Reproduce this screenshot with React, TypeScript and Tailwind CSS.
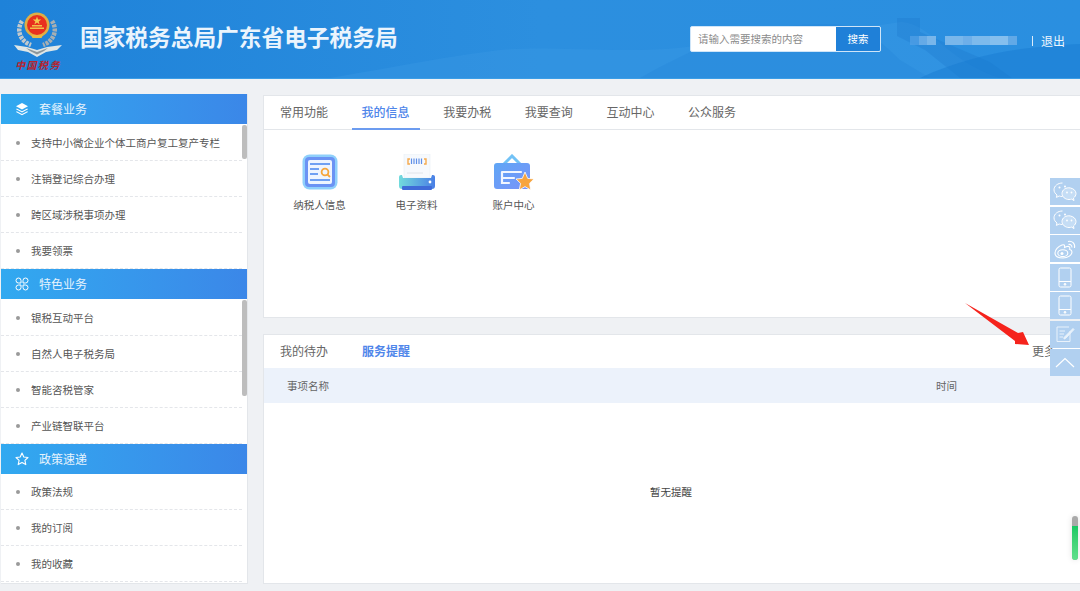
const cjk = { fontFamily: '"Noto Sans CJK SC", "Liberation Sans", sans-serif' }

function Emblem() {
  return (
    <svg width="50" height="45" viewBox="0 0 50 45" className="block">
      {/* wreath */}
      <path d="M9 9 C3 18 7 29 18 33" fill="none" stroke="#c3c9cc" strokeWidth="4.5" strokeDasharray="3 1" />
      <path d="M39 9 C45 18 41 29 30 33" fill="none" stroke="#a7afb3" strokeWidth="4.5" strokeDasharray="3 1" />
      {/* ribbon */}
      <path d="M1 33 L14 35 L24 38 L34 35 L49 33 L44 38 L33 40 L24 45 L15 40 L5 38 Z" fill="#dfe6e6" />
      <path d="M13 36 L24 40 L35 36 L31 39 L24 42.5 L17 39 Z" fill="#8d979b" />
      {/* shield */}
      <circle cx="24" cy="13" r="12.5" fill="#e0ae45" />
      <circle cx="24" cy="13" r="10" fill="#e8301f" />
      <path d="M24 4.5 l1.1 3 3.1 0 -2.5 1.9 0.9 3 -2.6 -1.8 -2.6 1.8 0.9 -3 -2.5 -1.9 3.1 0 z" fill="#f3c94e" />
      <path d="M17 15.5 h14 v1.6 h-14 z M19 13 h10 v1.6 h-10 z" fill="#f0c14a" />
      <path d="M18 23 h12 l-1.5 3 h-9 z" fill="#e9b844" />
    </svg>
  )
}

function Mountains() {
  return (
    <svg className="absolute inset-0 h-full w-full" viewBox="0 0 1080 78" preserveAspectRatio="none">
      <path d="M330 78 C400 66 450 56 500 50 C560 44 640 58 720 42 C790 26 860 30 900 22 C930 22 945 60 1000 78 Z" fill="#3d9ae4" fillOpacity="0.35" />
      <path d="M640 78 C690 50 740 24 830 24 C860 24 880 40 900 60 L930 78 Z" fill="#1f7fd6" fillOpacity="0.25" />
      <path d="M897 18 L920 18 L920 32 L990 62 L1012 78 L960 78 L925 50 L897 36 Z" fill="#1a74c9" fillOpacity="0.28" />
      <path d="M920 78 C980 50 1040 46 1080 44 L1080 78 Z" fill="#1779d1" fillOpacity="0.45" />
    </svg>
  )
}

function Header() {
  return (
    <header className="relative flex h-[79px] items-center justify-between border-b border-[#3b9de6] bg-gradient-to-r from-[#1e82d9] via-[#2c8fdf] to-[#2a8fe0]">
      <Mountains />
      <div className="relative flex items-center pl-[13px]">
        <div className="flex w-[50px] flex-col items-center pt-[4px]">
          <Emblem />
          <span className="mt-[2px] text-[10px] font-bold leading-[12px] tracking-[1.4px] whitespace-nowrap text-[#b5232f] italic">中国税务</span>
        </div>
        <h1 className="mb-[3px] ml-[17px] text-[22.7px] font-bold whitespace-nowrap text-[#eaf4fd]">国家税务总局广东省电子税务局</h1>
      </div>
      <div className="relative flex items-center pr-[15px] pb-[1px]">
        <div className="flex h-[26px] w-[191px] overflow-hidden rounded-[2px] border border-[#cfe5f8] bg-white">
          <span className="flex flex-1 items-center pl-[7px] text-[10.5px] text-[#8b8b8b]">请输入需要搜索的内容</span>
          <span className="flex w-[44px] items-center justify-center bg-[#1f80d8] text-[10.5px] text-white">搜索</span>
        </div>
        <div className="mt-[4px] ml-[29px] flex h-[9px] items-center opacity-80">
          <span className="h-full w-[9px] bg-[#4f9fe6]" />
          <span className="h-full w-[8px] bg-[#74b2ea]" />
          <span className="h-full w-[9px] bg-[#8dc1ee]" />
          <span className="ml-[9px] h-full w-[18px] bg-[#8dc1ee]" />
          <span className="h-full w-[9px] bg-[#7fb8ec]" />
          <span className="h-full w-[18px] bg-[#92c5f0]" />
          <span className="h-full w-[18px] bg-[#9ccbf2]" />
          <span className="h-full w-[9px] bg-[#6fb0e9]" />
        </div>
        <span className="mt-[4px] ml-[15px] h-[10px] w-px bg-[#dcecfa]" />
        <span className="mt-[4px] ml-[8px] text-[12px] text-[#eef6fd]">退出</span>
      </div>
    </header>
  )
}

function SideHead({ icon, title }: { icon: React.ReactNode; title: string }) {
  return (
    <div className="flex h-[30px] items-center bg-gradient-to-r from-[#31a9f0] to-[#3b87e8] text-white">
      <span className="flex w-[38px] justify-center pl-[3px]">{icon}</span>
      <span className="text-[12px] text-[#e6f3fd]">{title}</span>
    </div>
  )
}

function SideRows({ items, bar, pad }: { items: string[]; bar: string; pad: string }) {
  return (
    <div className={pad}>
      <div className="relative">
        {items.map((t) => (
          <div key={t} className="mr-[5px] flex h-[36px] items-center border-b border-dashed border-[#e4e6ea]">
            <span className="ml-[15px] h-[4px] w-[4px] rounded-full bg-[#9a9a9a]" />
            <span className="ml-[11px] text-[10.5px] whitespace-nowrap text-[#555]">{t}</span>
          </div>
        ))}
        <div className={bar} />
      </div>
    </div>
  )
}

function Sidebar() {
  return (
    <aside className="ml-[1px] h-[490px] w-[247px] shrink-0 overflow-hidden border-r border-b border-[#e3e6ea] bg-white">
      <SideHead
        title="套餐业务"
        icon={
          <svg width="14" height="14" viewBox="0 0 14 14" fill="#fff">
            <path d="M7 1 L13 4.3 L7 7.6 L1 4.3 Z" />
            <path d="M1.8 6.4 L7 9.2 L12.2 6.4 L13 7.2 L7 10.4 L1 7.2 Z" />
            <path d="M1.8 9.2 L7 12 L12.2 9.2 L13 10 L7 13.2 L1 10 Z" />
          </svg>
        }
      />
      <SideRows
        pad="pt-px"
        items={["支持中小微企业个体工商户复工复产专栏", "注销登记综合办理", "跨区域涉税事项办理", "我要领票"]}
        bar="absolute top-0 right-0 h-[34px] w-[5px] rounded-[2px] bg-[#bdbdbd]"
      />
      <SideHead
        title="特色业务"
        icon={
          <svg width="14" height="14" viewBox="0 0 14 14" fill="none" stroke="#fff" strokeWidth="1">
            <path d="M3.5 1 a2.5 2.5 0 0 1 2.5 2.5 V6 H3.5 a2.5 2.5 0 0 1 0 -5 Z" />
            <path d="M10.5 1 a2.5 2.5 0 0 0 -2.5 2.5 V6 h2.5 a2.5 2.5 0 0 0 0 -5 Z" />
            <path d="M3.5 13 a2.5 2.5 0 0 0 2.5 -2.5 V8 H3.5 a2.5 2.5 0 0 0 0 5 Z" />
            <path d="M10.5 13 a2.5 2.5 0 0 1 -2.5 -2.5 V8 h2.5 a2.5 2.5 0 0 1 0 5 Z" />
          </svg>
        }
      />
      <SideRows
        pad="pt-px"
        items={["银税互动平台", "自然人电子税务局", "智能咨税管家", "产业链智联平台"]}
        bar="absolute top-0 right-0 h-[96px] w-[5px] rounded-[2px] bg-[#bdbdbd]"
      />
      <SideHead
        title="政策速递"
        icon={
          <svg width="14" height="14" viewBox="0 0 14 14" fill="none" stroke="#fff" strokeWidth="1.1" strokeLinejoin="round">
            <path d="M7 1 L8.8 5 L13 5.5 L9.9 8.3 L10.8 12.6 L7 10.4 L3.2 12.6 L4.1 8.3 L1 5.5 L5.2 5 Z" />
          </svg>
        }
      />
      <SideRows pad="" items={["政策法规", "我的订阅", "我的收藏"]} bar="hidden" />
    </aside>
  )
}

function ProfileIcon() {
  return (
    <svg width="36" height="36" viewBox="0 0 36 36">
      <rect x="0.5" y="0.5" width="35" height="35" rx="7" fill="#8fd0fb" />
      <rect x="3" y="3" width="30" height="30" rx="4" fill="#6b93f4" />
      <rect x="6" y="6" width="24" height="24" rx="2" fill="#eef5ff" />
      <path d="M8 9 H28 V11 H8 Z M8 14 H17 V16 H8 Z M8 19 H16 V21 H8 Z M8 25 H28 V27 H8 Z" fill="#6fa0f3" />
      <circle cx="23" cy="18" r="3.4" fill="none" stroke="#f5a63d" strokeWidth="1.8" />
      <path d="M25.4 20.4 L28 23" stroke="#f5a63d" strokeWidth="1.8" />
    </svg>
  )
}

function PrinterIcon() {
  return (
    <svg width="38" height="36" viewBox="0 0 38 36">
      <rect x="6" y="0" width="26" height="24" fill="#f6f9fd" stroke="#e6edf6" strokeWidth="0.6" />
      <path d="M12 5 H10 V10 H12 M26 5 H28 V10 H26" fill="none" stroke="#f5ab4e" strokeWidth="1.4" />
      <path d="M13.5 4.5 V10 M16 4.5 V10 M18.5 4.5 V10 M21 4.5 V10 M23.5 4.5 V10" stroke="#5f8fe8" strokeWidth="1.2" />
      <path d="M9 19 H25" stroke="#e0e4ea" strokeWidth="1" />
      <path d="M1 23 C1 21 3 21 4 21 L5 24 H33 L34 21 C35 21 37 21 37 23 V32 C37 34 36 35 34 35 H4 C2 35 1 34 1 32 Z" fill="url(#pg)" />
      <rect x="4" y="32" width="30" height="4" rx="1" fill="#3f6bd8" />
      <circle cx="32" cy="28" r="1.4" fill="#fff" />
      <defs>
        <linearGradient id="pg" x1="0" x2="1" y1="0" y2="0">
          <stop offset="0" stopColor="#72dbdc" />
          <stop offset="1" stopColor="#4a7fe6" />
        </linearGradient>
      </defs>
    </svg>
  )
}

function AccountIcon() {
  return (
    <svg width="40" height="37" viewBox="0 0 40 37">
      <path d="M10 10 L18 2 L26 10" fill="none" stroke="#72c2f6" strokeWidth="3" />
      <rect x="0" y="9" width="36" height="26" rx="3" fill="url(#ag)" />
      <path d="M8 18 H27 M8 24 H20 M8 18 V29 H15" fill="none" stroke="#f1f6ff" strokeWidth="2.2" strokeLinecap="round" />
      <path d="M31 18 L33.7 24.4 L40 25 L35.4 29.4 L36.8 36 L31 32.6 L25.2 36 L26.6 29.4 L22 25 L28.3 24.4 Z" fill="#f7a43e" stroke="#fff" strokeWidth="0.8" />
      <defs>
        <linearGradient id="ag" x1="0" x2="1" y1="0" y2="1">
          <stop offset="0" stopColor="#5fa6f5" />
          <stop offset="1" stopColor="#7a93f9" />
        </linearGradient>
      </defs>
    </svg>
  )
}

const tabs = ["常用功能", "我的信息", "我要办税", "我要查询", "互动中心", "公众服务"]

function InfoPanel() {
  const apps = [
    { label: "纳税人信息", icon: <ProfileIcon /> },
    { label: "电子资料", icon: <PrinterIcon /> },
    { label: "账户中心", icon: <AccountIcon /> },
  ]
  return (
    <section className="mt-[1px] h-[223px] border-y border-l border-[#e3e6ea] bg-white">
      <div className="flex h-[34px] gap-[13.6px] border-b border-[#e3e6ea] pl-[6px]">
        {tabs.map((t) => (
          <div
            key={t}
            className={
              t === "我的信息"
                ? "flex h-[34px] items-center border-b-2 border-[#6c9cf0] px-[10px] text-[12px] font-medium text-[#4f86ea]"
                : "flex h-[34px] items-center px-[10px] pb-[2px] text-[12px] text-[#666]"
            }
          >
            {t}
          </div>
        ))}
      </div>
      <div className="flex pt-[24px] pl-[7px]">
        {apps.map((a) => (
          <div key={a.label} className="flex w-[97px] flex-col items-center">
            <div className="flex h-[36px] items-center justify-center">{a.icon}</div>
            <span className="mt-[7px] text-[10.5px] leading-[16px] text-[#555]">{a.label}</span>
          </div>
        ))}
      </div>
    </section>
  )
}

function RemindPanel() {
  return (
    <section className="mt-[16px] flex h-[250px] flex-col border-y border-l border-[#e3e6ea] bg-white">
      <div className="flex h-[33px] shrink-0 items-center pb-[2px] pl-[16px]">
        <span className="text-[12px] text-[#666]">我的待办</span>
        <span className="ml-[34px] text-[12px] font-bold text-[#4f86ea]">服务提醒</span>
        <span className="ml-[622px] text-[12px] whitespace-nowrap text-[#666]">更多</span>
      </div>
      <div className="flex h-[35px] shrink-0 items-center bg-[#ecf2fb] pl-[23px] text-[10.5px] text-[#666]">
        <span className="w-[649px]">事项名称</span>
        <span>时间</span>
      </div>
      <div className="flex flex-1 items-center justify-center pr-[2px] pb-[3px] text-[10.5px] text-[#444]">暂无提醒</div>
    </section>
  )
}

function WechatIcon() {
  return (
    <svg width="24" height="20" viewBox="0 0 24 20" fill="none" stroke="#fff" strokeWidth="1">
      <path d="M9.5 1 C4.8 1 1 4 1 7.8 C1 9.9 2.2 11.7 4 13 L3.4 15.4 L6.2 14 C7.2 14.3 8.3 14.5 9.5 14.5" />
      <path d="M17.5 6 C12.8 5 9 8 9 11.5 C9 15 12.4 17.5 16 17.5 C17 17.5 17.9 17.3 18.7 17.1 L21 18.6 L20.5 16 C22 14.9 23 13.3 23 11.5 C23 9 20.8 6.7 17.5 6 Z" fill="#c5ddf5" />
      <circle cx="6.5" cy="5.5" r="1" fill="#fff" stroke="none" />
      <circle cx="12" cy="4.5" r="1" fill="#fff" stroke="none" />
      <circle cx="14" cy="10.5" r="0.9" fill="#fff" stroke="none" />
      <circle cx="18.5" cy="10.5" r="0.9" fill="#fff" stroke="none" />
    </svg>
  )
}

function WeiboIcon() {
  return (
    <svg width="23" height="20" viewBox="0 0 23 20" fill="none" stroke="#fff" strokeWidth="1.1">
      <path d="M8 6 C4 7.5 1 11 1 14 C1 17.5 5 19 9 19 C14 19 18 16 18 13 C18 11 16.5 10.5 15.5 10.2 C16.5 8 15 7 13 7.5 C11.5 8 10.5 8.5 10.5 8.5 C11 6 10 5.2 8 6 Z" />
      <ellipse cx="8.8" cy="14.2" rx="5" ry="3.4" />
      <circle cx="8" cy="14.5" r="1.5" fill="#fff" stroke="none" />
      <path d="M14 2.5 C18 1.5 21.5 4.5 20.5 9" />
      <path d="M14.5 5.5 C16.5 5 18.3 6.5 17.8 8.5" />
    </svg>
  )
}

function FloatBar() {
  const tile = "flex h-[27px] w-[30px] items-center justify-center bg-[#b1d0f0]"
  const tablet = (
    <svg width="14" height="21" viewBox="0 0 14 21" fill="none" stroke="#fff" strokeWidth="1">
      <rect x="1" y="1" width="12" height="19" rx="1.5" />
      <path d="M1 14.5 H13" />
      <circle cx="7" cy="17.3" r="0.9" fill="#fff" />
    </svg>
  )
  return (
    <div className="absolute top-[178px] right-0 flex flex-col gap-[1.5px]">
      <div className={tile}><WechatIcon /></div>
      <div className={tile}><WechatIcon /></div>
      <div className={tile}><WeiboIcon /></div>
      <div className={tile}>{tablet}</div>
      <div className={tile}>{tablet}</div>
      <div className={tile}>
        <svg width="19" height="17" viewBox="0 0 19 17" fill="none" stroke="#e9f2fb" strokeWidth="1">
          <path d="M14 5 V15.5 H1 V1 H13" />
          <path d="M3.5 5 H9 M3.5 8 H8 M3.5 11 H7" />
          <path d="M8 11.5 L17 2.5 L18 3.5 L9.5 12.5 L8 13 Z" fill="#e9f2fb" />
        </svg>
      </div>
      <div className={tile}>
        <svg width="20" height="11" viewBox="0 0 20 11" fill="none" stroke="#fff" strokeWidth="1.2">
          <path d="M1 10 L10 1.5 L19 10" />
        </svg>
      </div>
    </div>
  )
}

export default function App() {
  return (
    <div className="relative h-[591px] w-[1080px] overflow-hidden bg-[#eff1f4]" style={cjk}>
      <Header />
      <div className="flex gap-[15px] pt-[15px]">
        <Sidebar />
        <main className="min-w-0 flex-1">
          <InfoPanel />
          <RemindPanel />
        </main>
      </div>
      <FloatBar />
      {/* red annotation arrow */}
      <svg className="absolute top-[300px] left-[960px]" width="80" height="50" viewBox="0 0 80 50">
        <path d="M5 3 L58 33 L63 32 L69 45 L55 44 L55 41 Z" fill="#f5231c" />
      </svg>
      {/* green scroll thumb */}
      <div className="absolute top-[516px] left-[1072px] h-[44px] w-[6px] rounded-[3px] bg-[#a9a9a9] shadow-[0_0_6px_rgba(0,0,0,0.12)]">
        <div className="mt-[10px] h-[34px] w-full rounded-b-[3px] bg-gradient-to-b from-[#17c964] to-[#5fe08c]" />
      </div>
    </div>
  )
}
